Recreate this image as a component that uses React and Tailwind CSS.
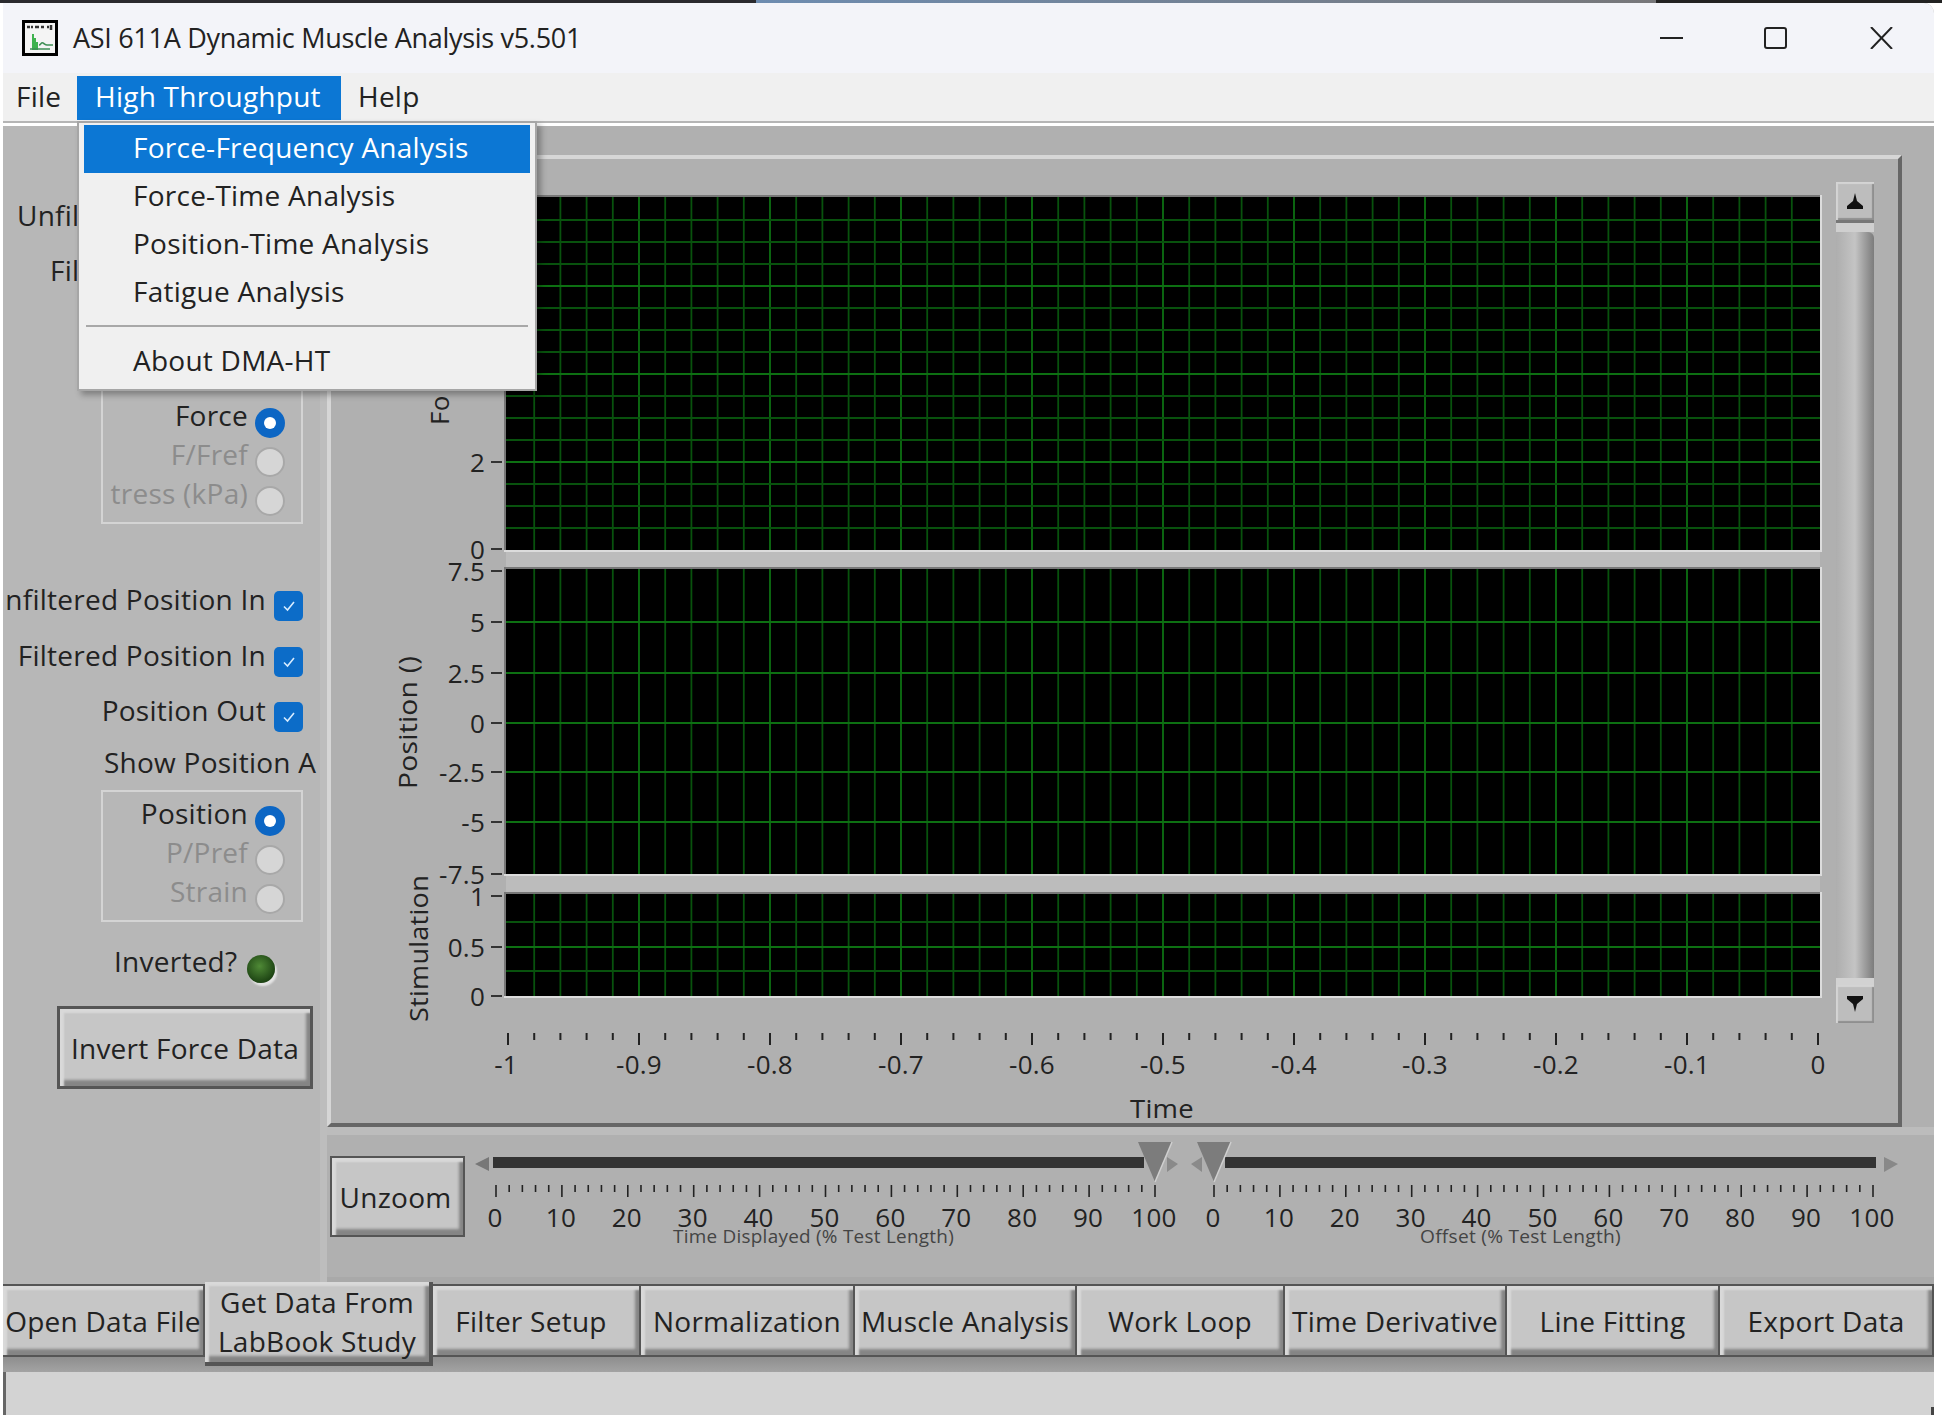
import React from "react";

const BLUE = "bg-[#0c77d4]";

const menuItems = ["Force-Time Analysis", "Position-Time Analysis", "Fatigue Analysis"];

const bottomButtons = [
  ["Open Data File", "w-[202px]"],
  ["Filter Setup", "w-[208px] pr-[10px]"],
  ["Normalization", "w-[214px]"],
  ["Muscle Analysis", "w-[222px]"],
  ["Work Loop", "w-[208px]"],
  ["Time Derivative", "w-[222px]"],
  ["Line Fitting", "w-[213px]"],
  ["Export Data", "w-[214px]"],
];

const BEVEL =
  "shadow-[inset_4px_4px_2px_#d9d9d9,inset_-4px_-6px_3px_#858585] bg-[#c6c6c6] text-[#222]";

function LvButton({ label, className }) {
  return (
    <div className={`flex shrink-0 items-center justify-center border-2 border-[#555] whitespace-nowrap ${BEVEL} ${className}`}>
      {label}
    </div>
  );
}

function Radio({ on }) {
  if (on) {
    return (
      <div className="flex h-[30px] w-[30px] shrink-0 items-center justify-center rounded-full bg-[#0c66c4]">
        <div className="h-[12px] w-[12px] rounded-full bg-white" />
      </div>
    );
  }
  return <div className="h-[30px] w-[30px] shrink-0 rounded-full border-2 border-[#a8a8a8] bg-[#d6d6d6]" />;
}

function RadioBox({ rows, className }) {
  return (
    <div className={`ml-[98px] w-[202px] shrink-0 border-2 border-[#d4d4d4] pr-[16px] ${className}`}>
      {rows.map(([label, on]) => (
        <div key={label} className="flex h-[39px] items-center justify-end gap-[7px]">
          <span className={`mb-[15px] whitespace-nowrap ${on ? "text-[#222]" : "text-[#8c8c8c]"}`}>{label}</span>
          <Radio on={on} />
        </div>
      ))}
    </div>
  );
}

function CheckRow({ label, className }) {
  return (
    <div className={`flex h-[30px] shrink-0 items-center justify-end gap-[8px] pr-[17px] ${className}`}>
      <span className="mb-[15px] whitespace-nowrap">{label}</span>
      <div className="flex h-[30px] w-[29px] shrink-0 items-center justify-center rounded-[5px] bg-[#0c6cc8]">
        <svg width="14" height="12" viewBox="0 0 14 12" fill="none" stroke="#d8ecff" strokeWidth="1.6">
          <path d="M2 6.5 L5.5 10 L12 2" />
        </svg>
      </div>
    </div>
  );
}

function Chart() {
  const xs = [];
  for (let k = 0; k <= 50; k++) xs.push(k);
  const plots = [
    { top: 197, bottom: 550, major: [286, 374, 462], minor: [220, 242, 264, 308, 330, 352, 396, 418, 440, 484, 506, 528] },
    { top: 569, bottom: 874, major: [622, 673, 723, 772, 822], minor: [] },
    { top: 894, bottom: 996, major: [947], minor: [922, 971] },
  ];
  const yLabels = [
    ["2", 462], ["0", 549],
    ["7.5", 571], ["5", 622], ["2.5", 673], ["0", 723], ["-2.5", 772], ["-5", 822], ["-7.5", 874],
    ["1", 896], ["0.5", 947], ["0", 996],
  ];
  const xLabels = ["-1", "-0.9", "-0.8", "-0.7", "-0.6", "-0.5", "-0.4", "-0.3", "-0.2", "-0.1", "0"];
  return (
    <svg width="1499" height="964" viewBox="331 159 1499 964" className="shrink-0" fontSize="26" fill="#222">
      <rect x="506" y="550" width="1314" height="19" fill="#bcbcbc" />
      <rect x="506" y="874" width="1314" height="20" fill="#bcbcbc" />
      {plots.map((p) => (
        <g key={p.top}>
          <rect x="504" y={p.top - 2} width="1318" height={p.bottom - p.top + 4} fill="#dcdcdc" />
          <rect x="504" y={p.top - 2} width="1316" height="2" fill="#777" />
          <rect x="504" y={p.top} width="2" height={p.bottom - p.top} fill="#777" />
          <rect x="506" y={p.top} width="1314" height={p.bottom - p.top} fill="#000" />
          {xs.slice(1, 50).map((k) => (
            <line
              key={k}
              x1={508 + 26.2 * k}
              x2={508 + 26.2 * k}
              y1={p.top}
              y2={p.bottom}
              stroke={k % 5 === 0 ? "#0d7012" : "#08520d"}
              strokeWidth="1.8"
            />
          ))}
          {p.minor.map((y) => (
            <line key={y} x1="506" x2="1820" y1={y} y2={y} stroke="#08520d" strokeWidth="1.8" />
          ))}
          {p.major.map((y) => (
            <line key={y} x1="506" x2="1820" y1={y} y2={y} stroke="#0d7012" strokeWidth="1.8" />
          ))}
        </g>
      ))}
      {yLabels.map(([t, y], i) => (
        <g key={i}>
          <text x="485" y={y + 9.5} textAnchor="end">{t}</text>
          <line x1="491" x2="502" y1={y} y2={y} stroke="#333" strokeWidth="2" />
        </g>
      ))}
      <text transform="translate(449 425) rotate(-90)">Fo</text>
      <text transform="translate(417 789) rotate(-90)" textLength="133" lengthAdjust="spacingAndGlyphs">Position ()</text>
      <text transform="translate(428 1022) rotate(-90)" textLength="147" lengthAdjust="spacingAndGlyphs">Stimulation</text>
      {xs.map((k) => (
        <line
          key={k}
          x1={508 + 26.2 * k}
          x2={508 + 26.2 * k}
          y1="1033"
          y2={k % 5 === 0 ? 1045 : 1040}
          stroke="#222"
          strokeWidth="2"
        />
      ))}
      {xLabels.map((t, i) => (
        <text key={t} x={i === 0 ? 506 : 508 + 131 * i} y="1074" textAnchor="middle">{t}</text>
      ))}
      <text x="1162" y="1118" textAnchor="middle" textLength="64" lengthAdjust="spacingAndGlyphs">Time</text>
    </svg>
  );
}

function Thumb({ x, dir }) {
  const arrow = dir > 0
    ? `${x + 12},1157 ${x + 23},1164 ${x + 12},1172`
    : `${x - 12},1157 ${x - 23},1164 ${x - 12},1172`;
  return (
    <g>
      <polygon points={arrow} fill="#8a8a8a" />
      <polygon points={`${x - 17},1142 ${x + 17},1142 ${x},1182`} fill="#7c7c7c" />
      <line x1={x + 17} y1="1142" x2={x} y2="1182" stroke="#d0d0d0" strokeWidth="1.5" />
    </g>
  );
}

function Scale({ start }) {
  const ticks = [];
  for (let k = 0; k <= 50; k++) ticks.push(k);
  return (
    <g>
      {ticks.map((k) => (
        <line
          key={k}
          x1={start + 13.18 * k}
          x2={start + 13.18 * k}
          y1="1185"
          y2={k % 5 === 0 ? 1197 : 1192}
          stroke="#222"
          strokeWidth="1.6"
        />
      ))}
      {[0, 10, 20, 30, 40, 50, 60, 70, 80, 90, 100].map((v) => (
        <text key={v} x={start + 6.59 * v - 1} y="1227" textAnchor="middle">{v}</text>
      ))}
    </g>
  );
}

function Sliders() {
  return (
    <svg width="1464" height="142" viewBox="470 1135 1464 142" className="shrink-0" fontSize="26" fill="#222">
      <polygon points="489,1157 475,1164 489,1171" fill="#777" />
      <rect x="493" y="1157" width="651" height="11" fill="#333" />
      <rect x="1225" y="1157" width="651" height="11" fill="#333" />
      <polygon points="1884,1157 1898,1164 1884,1172" fill="#888" />
      <Thumb x={1155} dir={1} />
      <Thumb x={1214} dir={-1} />
      <Scale start={496} />
      <Scale start={1214} />
      <text x="673" y="1243" fontSize="18" fill="#444" textLength="281" lengthAdjust="spacingAndGlyphs">Time Displayed (% Test Length)</text>
      <text x="1420" y="1243" fontSize="18" fill="#444" textLength="201" lengthAdjust="spacingAndGlyphs">Offset (% Test Length)</text>
    </svg>
  );
}

function AppIcon() {
  return (
    <svg width="36" height="36" viewBox="0 0 36 36" className="shrink-0">
      <rect x="1.5" y="1.5" width="33" height="33" fill="#f4f4f4" stroke="#000" strokeWidth="3" />
      <path d="M5 7h3M9 7h2M13 7h4M19 7h3M25 7h2M29 5v5" stroke="#333" strokeWidth="2.5" fill="none" />
      <path d="M11 14v16M13 18v12M15 22v8" stroke="#3fb24f" strokeWidth="2" fill="none" />
      <path d="M8 29h20M17 25c2 0 2-3 4-2s2 2 4 2h6" stroke="#3f8f55" strokeWidth="1.5" fill="none" />
    </svg>
  );
}

export default function App() {
  return (
    <div className="h-[1420px] w-[1942px] overflow-hidden bg-white text-[28px] leading-[34px] tracking-[0.25px] text-[#222] [font-family:'Open_Sans',sans-serif]">
      {/* desktop peeking through above the window */}
      <div className="flex h-[3px]">
        <div className="w-[756px] bg-[#2a2a2e]" />
        <div className="w-[900px] bg-gradient-to-r from-[#6d8cb0] to-[#77777a]" />
        <div className="flex-1 bg-[#222]" />
      </div>

      <div className="relative ml-[3px] flex h-[1412px] w-[1931px] flex-col overflow-hidden rounded-tr-[10px] bg-[#b2b2b2]">
        {/* title bar */}
        <div className="flex h-[70px] shrink-0 items-center bg-[#f3f4f9] pl-[19px]">
          <AppIcon />
          <span className="ml-[15px] whitespace-nowrap text-[27px] tracking-[-0.3px]">ASI 611A Dynamic Muscle Analysis v5.501</span>
          <div className="ml-auto flex items-center">
            <svg width="23" height="22" viewBox="0 0 23 22" className="mr-[81px]" stroke="#222" strokeWidth="2" fill="none">
              <path d="M0 11h23" />
            </svg>
            <svg width="23" height="22" viewBox="0 0 23 22" className="mr-[83px]" stroke="#222" strokeWidth="2" fill="none">
              <rect x="1" y="1" width="21" height="20" rx="2" />
            </svg>
            <svg width="23" height="22" viewBox="0 0 23 22" className="mr-[41px]" stroke="#222" strokeWidth="2" fill="none">
              <path d="M1 0l21 22M22 0L1 22" />
            </svg>
          </div>
        </div>

        {/* menu bar */}
        <div className="flex h-[50px] shrink-0 border-b-2 border-[#b5b5b5] bg-[#f0f0f0] pt-[3px] pl-[13px] leading-[40px]">
          <span className="h-[44px] w-[61px]">File</span>
          <div className={`h-[44px] w-[264px] pl-[18px] text-white ${BLUE}`}>High Throughput</div>
          <span className="ml-[17px] h-[44px]">Help</span>
        </div>
        <div className="h-[3px] shrink-0 bg-white" />

        <div className="flex min-h-0 flex-1">
          {/* left panel */}
          <div className="flex w-[317px] shrink-0 flex-col overflow-hidden bg-[#b7b7b7]">
            <div className="ml-[14px] mt-[72px] h-[34px] shrink-0 whitespace-nowrap">Unfil</div>
            <div className="ml-[47px] mt-[21px] h-[34px] shrink-0 whitespace-nowrap">Fil</div>
            <RadioBox className="mt-[100px] h-[137px] pt-[14px]" rows={[["Force", true], ["F/Fref", false], ["tress (kPa)", false]]} />
            <CheckRow label="nfiltered Position In" className="mt-[67px]" />
            <CheckRow label="Filtered Position In" className="mt-[26px]" />
            <CheckRow label="Position Out" className="mt-[25px]" />
            <div className="ml-[101px] mt-[13px] h-[34px] shrink-0 whitespace-nowrap">Show Position A</div>
            <RadioBox className="mt-[11px] h-[132px] pt-[9px]" rows={[["Position", true], ["P/Pref", false], ["Strain", false]]} />
            <div className="ml-[111px] mt-[28px] flex h-[30px] shrink-0 items-center gap-[10px]">
              <span className="mb-[9px] whitespace-nowrap">Inverted?</span>
              <div className="mt-[8px] h-[28px] w-[28px] shrink-0 rounded-full bg-[radial-gradient(circle_at_45%_40%,#4f8a36,#1e4514_70%)] shadow-[2px_3px_2px_#e4e4e4]" />
            </div>
            <LvButton label="Invert Force Data" className="ml-[54px] mt-[26px] h-[83px] w-[256px] border-[3px]" />
          </div>
          <div className="w-[7px] shrink-0 bg-[#bdbdbd]" />

          {/* right side */}
          <div className="flex min-w-0 flex-1 flex-col bg-[#b0b0b0] pt-[29px]">
            <div className="flex h-[972px] w-[1575px] shrink-0 border-2 border-b-4 border-l-4 border-r-4 border-t-4 border-b-[#666] border-l-[#d6d6d6] border-r-[#666] border-t-[#d6d6d6]">
              <Chart />
              <div className="ml-[6px] mt-[23px] flex h-[841px] w-[38px] shrink-0 flex-col">
                <div className="flex h-[38px] shrink-0 items-center justify-center bg-[#bdbdbd] shadow-[inset_2px_2px_1px_#d4d4d4,inset_-2px_-2px_1px_#8f8f8f]">
                  <svg width="18" height="16" viewBox="0 0 18 16" fill="#111"><path d="M9 0L11 8L17 13V16H1V13L7 8Z" /></svg>
                </div>
                <div className="h-[12px] shrink-0 border-t-[3px] border-[#777] bg-[#cfcfcf]" />
                <div className="flex-1 rounded-t-[6px] bg-gradient-to-r from-[#aeaeae] via-[#c4c4c4] to-[#7c7c7c]" />
                <div className="h-[7px] shrink-0 bg-[#d2d2d2]" />
                <div className="flex h-[38px] shrink-0 items-center justify-center bg-[#bdbdbd] shadow-[inset_2px_2px_1px_#d4d4d4,inset_-2px_-2px_1px_#8f8f8f]">
                  <svg width="18" height="16" viewBox="0 0 18 16" fill="#111"><path d="M9 16L11 8L17 3V0H1V3L7 8Z" /></svg>
                </div>
              </div>
            </div>
            <div className="h-[8px] shrink-0 bg-[#bcbcbc]" />
            <div className="flex h-[142px] shrink-0">
              <LvButton label="Unzoom" className="ml-[3px] mt-[21px] h-[81px] w-[135px] pr-[4px]" />
              <div className="ml-[5px]">
                <Sliders />
              </div>
            </div>
            <div className="h-[7px] shrink-0 bg-[#a9a9a9]" />
          </div>
        </div>

        {/* bottom button row */}
        <div className="relative flex h-[73px] shrink-0">
          <LvButton label={bottomButtons[0][0]} className={`border-l-0 ${bottomButtons[0][1]}`} />
          <div className={`z-10 -mt-[2px] flex h-[84px] w-[228px] shrink-0 flex-col items-center justify-center border-r-4 border-b-4 border-[#555] leading-[39px] ${BEVEL}`}>
            <span>Get Data From</span>
            <span>LabBook Study</span>
          </div>
          {bottomButtons.slice(1).map(([label, w]) => (
            <LvButton key={label} label={label} className={`border-l-0 ${w}`} />
          ))}
        </div>
        <div className="h-[15px] shrink-0 bg-gradient-to-b from-[#8e8e8e] to-[#a3a3a3]" />
        <div className="flex h-[43px] shrink-0 items-end justify-end border-l-[3px] border-[#666] bg-[#d3d3d3]">
          <div className="h-[8px] w-[3px] bg-[#444]" />
        </div>

        {/* open dropdown */}
        <div className="absolute left-[74px] top-[118px] z-20 h-[270px] w-[460px] border-2 border-[#a6a6a6] bg-[#f0f0f0] pt-[2px] leading-[44px] shadow-[4px_4px_6px_rgba(0,0,0,0.3)]">
          <div className={`mx-[5px] h-[48px] pl-[49px] text-white ${BLUE}`}>Force-Frequency Analysis</div>
          {menuItems.map((item) => (
            <div key={item} className="mx-[5px] h-[48px] pl-[49px]">{item}</div>
          ))}
          <div className="mx-[7px] mt-[8px] h-[2px] bg-[#a8a8a8]" />
          <div className="mx-[5px] mt-[11px] h-[48px] pl-[49px]">About DMA-HT</div>
        </div>
      </div>
    </div>
  );
}
